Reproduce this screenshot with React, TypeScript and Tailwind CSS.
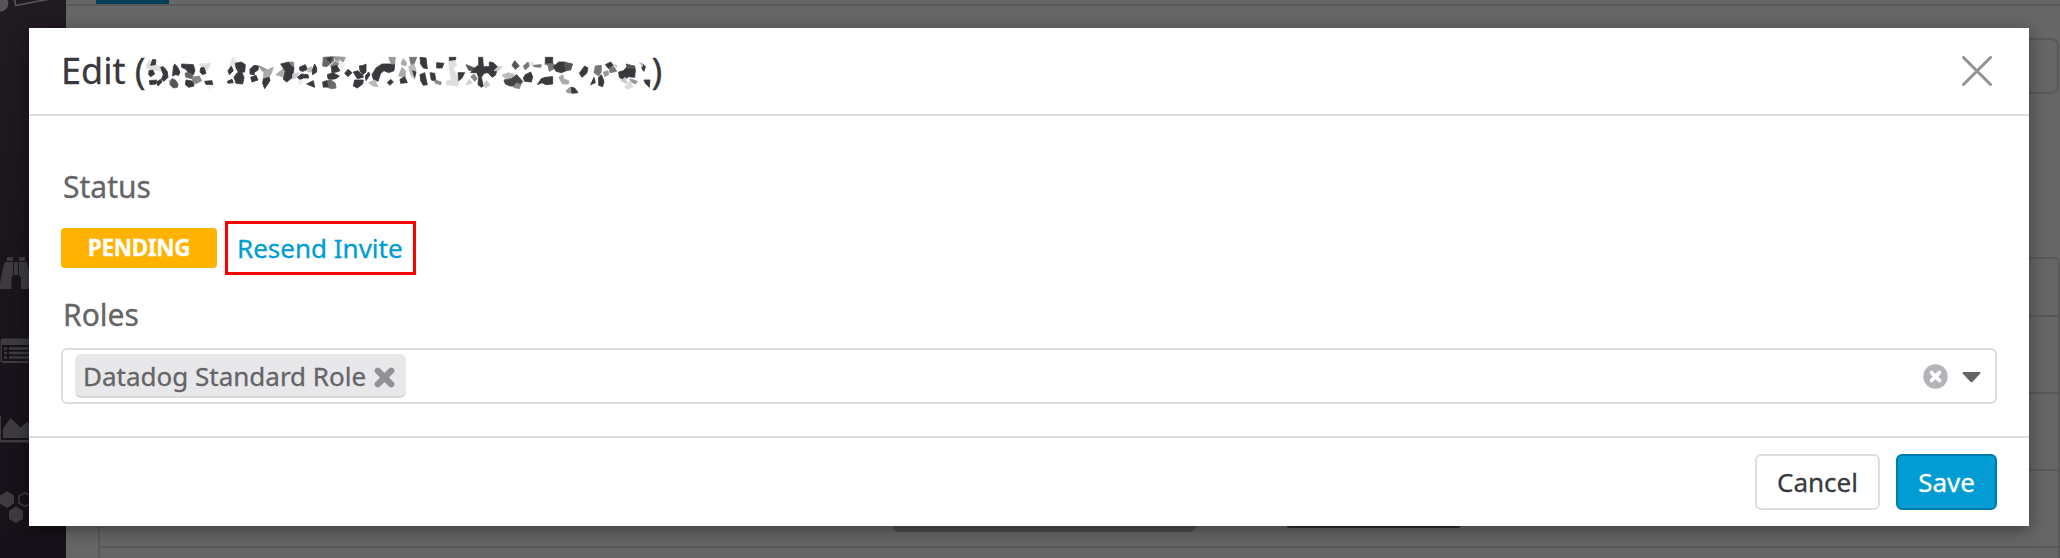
import React from "react";

const D = "#3a383d";

// Fragments of the scrambled e-mail address, at three units per pixel.
const shardsLeft: [string, string][] = [
  ["#dedede", "50,72 60,60 85,78 110,84 108,95 70,90 50,86"],
  [D, "68,58 78,60 76,74 62,76"],
  [D, "92,82 100,80 112,95 114,112 102,124 94,118 100,104"],
  [D, "57,92 68,90 74,102 62,110 56,104"],
  [D, "58,122 80,120 78,132 60,134"],
  [D, "80,126 92,118 96,126 84,138"],
  [D, "130,80 134,72 142,80 150,96 146,106 136,104 128,108"],
  ["#999", "118,122 126,118 124,134 120,132"],
  ["#555358", "126,116 136,120 144,132 142,142 130,144 120,134"],
  [D, "155,82 155,72 190,74 195,92 190,104 176,100 168,88"],
  ["#666", "165,100 176,96 190,108 186,116 168,112"],
  [D, "168,120 190,124 192,138 176,142 166,134"],
  ["#888", "186,112 208,108 215,122 196,132 188,124"],
  ["#dedede", "208,72 242,70 234,88 220,96"],
  [D, "212,84 222,82 228,100 218,104 210,96"],
  [D, "224,124 246,122 248,134 228,134"],
  ["#eee", "228,136 242,136 240,148"],
  ["#e5e5e5", "298,76 310,50 322,68 318,78"],
  [D, "316,70 334,66 346,74 344,96 326,98 318,84"],
  [D, "294,92 304,78 310,92 298,104"],
  [D, "320,100 334,94 342,112 338,132 318,130 312,112"],
  [D, "292,124 306,118 310,128 294,130"],
  [D, "360,88 372,76 386,78 384,90 372,98 374,104 360,102"],
  ["#999", "384,76 410,88 414,98 398,94"],
  ["#aaa", "402,94 430,82 424,100 412,118 400,112"],
  [D, "362,112 378,106 384,120 366,126"],
  [D, "400,116 418,112 420,122 404,146 398,130"],
  ["#aaa", "438,104 462,84 468,96 462,112"],
  [D, "452,72 476,66 492,82 488,112 470,126 460,118 466,94"],
  ["#888", "480,66 490,66 492,80 484,76"],
  ["#ccc", "488,102 506,98 500,112 488,118"],
  [D, "508,82 526,74 532,88 520,94 510,92"],
  ["#bbb", "534,86 546,80 542,96 534,96"],
  [D, "546,92 554,72 560,84 560,96 548,104"],
  [D, "502,112 514,102 534,104 536,114 520,114 512,120"],
  ["#eee", "504,122 520,118 516,132 506,134"],
  [D, "530,132 550,122 554,142"],
  ["#666", "580,52 610,50 612,62 590,80 578,78"],
  ["#999", "612,50 646,52 640,66 626,66 616,60"],
  ["#888", "600,78 616,64 628,72 618,80"],
  [D, "590,56 606,52 600,66"],
  [D, "604,80 620,76 630,92 620,96 606,98"],
  [D, "592,104 608,98 628,108 618,116 606,118 594,116"],
  ["#6a6a6a", "588,124 600,118 616,130 618,144 604,146 588,140"],
  [D, "578,126 590,122 594,140 580,142"],
  ["#eee", "628,60 645,72 640,90 628,82"],
  [D, "654,88 666,98 654,110 644,100"],
  [D, "688,78 700,76 708,72 708,96 698,104 690,92"],
  [D, "670,96 684,92 698,106 700,112 682,116"],
  [D, "674,120 700,120 698,132 682,144 670,138"],
  [D, "706,108 716,96 720,104 708,122"],
  [D, "726,104 738,84 756,72 794,72 792,92 776,98 762,92 752,100 744,124 730,118"],
  ["#bbb", "716,128 734,120 744,140 728,138"],
  ["#999", "776,52 796,52 794,72 784,72"],
  [D, "782,118 790,126 780,136 772,128"],
];

const shardsRight: [string, string][] = [
  ["#aaa", "184,68 190,56 200,68 198,78 184,74"],
  ["#aaa", "176,108 186,82 196,92 196,112"],
  [D, "180,118 194,110 202,128 182,130"],
  ["#777", "208,52 230,52 222,72 214,76"],
  ["#bbb", "206,80 222,72 228,90 224,118 212,104"],
  [D, "218,92 228,96 224,112"],
  [D, "240,52 258,54 262,86 250,84 242,72"],
  [D, "240,104 254,98 262,134 250,136 242,122"],
  [D, "270,98 284,100 288,124 274,120"],
  ["#888", "284,120 304,126 302,134 286,130"],
  [D, "290,68 312,70 306,84 290,84"],
  [D, "328,52 348,52 346,60 328,66"],
  ["#dedede", "326,64 346,62 350,76 340,84 346,100 356,120 354,138 318,134 320,124 334,118 330,100"],
  [D, "354,98 374,98 366,114 356,122"],
  ["#555", "378,74 404,84 398,94 386,90"],
  [D, "416,52 428,52 430,80 448,80 448,66 460,68 474,82 466,106 456,112 444,98 432,100 424,112 430,138 424,142 414,134 416,112 410,98 392,98 408,80 416,76"],
  ["#888", "392,110 402,102 412,116 404,124"],
  ["#ccc", "378,134 388,118 396,130"],
  ["#ccc", "430,132 440,122 450,134 438,144"],
  ["#ccc", "462,92 474,80 486,80 476,92"],
  ["#555", "516,76 524,62 538,78 526,88"],
  ["#bbb", "486,106 504,98 524,104 512,116 494,114"],
  ["#454348", "492,120 514,116 530,104 548,124 538,138 510,138 496,132"],
  ["#888", "530,128 542,134 538,146 520,142"],
  ["#777", "550,78 564,66 568,78 556,90"],
  ["#777", "578,76 604,74 602,82 582,80"],
  ["#ddd", "568,68 580,66 578,78"],
  [D, "556,104 572,96 578,110 574,126 554,124 550,114"],
  ["#777", "614,72 636,66 650,82 628,94 624,76"],
  [D, "616,52 638,52 638,68 616,70"],
  [D, "640,80 656,66 674,66 684,90 664,98 648,94"],
  ["#555", "672,66 698,72 692,90 678,92"],
  [D, "592,134 604,116 616,112 638,110 638,132 618,134 606,128"],
  ["#aaa", "656,112 668,104 672,118 686,122 686,132 668,132"],
  ["#999", "678,152 690,142 698,144 694,160 682,158"],
  [D, "694,142 704,144 714,158 696,160"],
  [D, "718,100 734,78 744,84 740,100 726,112"],
  ["#777", "766,78 784,76 784,96 776,108 762,98"],
  [D, "752,134 762,112 766,128"],
  [D, "776,112 784,104 792,124 788,140 776,136"],
  [D, "796,74 812,66 820,76 806,86"],
  ["#777", "808,84 822,80 830,94 810,98"],
  ["#ccc", "822,74 832,76 830,84"],
  ["#999", "790,96 804,92 806,104 794,110"],
  [D, "836,96 850,92 862,80 884,78 886,92 884,112 866,110 850,120 838,112"],
  ["#555", "858,72 882,78 880,86 862,84"],
  ["#ccc", "842,122 856,112 862,132"],
  ["#ddd", "854,142 870,122 878,142 862,148"],
  ["#999", "870,116 892,124 886,132 874,126"],
  [D, "906,70 916,80 912,94 906,86"],
  ["#ccc", "898,68 906,68 908,80"],
  [D, "912,120 930,120 928,142 916,130"],
];

function ScrambledAddress() {
  return (
    <svg width="506" height="50" viewBox="48 18 1518 150" strokeWidth="2.500" strokeLinejoin="round" className="shrink-0">
      {shardsLeft.map(([fill, points]) => (
        <polygon key={points} fill={fill} stroke={fill} points={points} />
      ))}
      <g transform="translate(630 0)">
        {shardsRight.map(([fill, points]) => (
          <polygon key={points} fill={fill} stroke={fill} points={points} />
        ))}
      </g>
    </svg>
  );
}

function Sidebar() {
  return (
    <nav className="flex h-full w-[66px] shrink-0 flex-col overflow-hidden bg-linear-to-b from-[#211b21] via-[#19151b] to-[#17111a]">
      <svg width="66" height="14" viewBox="0 0 66 14" fill="none">
        <circle cx="0" cy="3.500" r="8.300" fill="#565457" />
        <path d="M14.500-3 15.500 5.500 50-1" stroke="#565457" strokeWidth="1.700" />
      </svg>
      <svg className="mt-[243px]" width="34" height="32" viewBox="0 0 34 32" fill="#3e3b40">
        <path d="M7 0h6v4H7zM19 0h6v4h-6zM5 5h8v13.500L11.500 20v12H0V27C1 19 3 11 5 5zM14 5h4v13h-4zM19 5h7.500C29 11 31 19 32 27v5H21V20l-2-1.500z" />
      </svg>
      <svg className="mt-[49px]" width="44" height="26" viewBox="0 0 44 26" fill="none">
        <path d="M3 .500h38q2 0 2 2v20.500q0 2-2 2H3q-2.500 0-2.500-2V3q0-2.500 2.500-2.500z" fill="#3e3b40" />
        <path d="M2 7h40v16H2z" fill="#17131a" />
        <path d="M4 10.500h3M4 15h3M4 19.500h3M9 10.500h31M9 15h31M9 19.500h31" stroke="#3e3b40" strokeWidth="2.400" />
      </svg>
      <svg className="mt-[52px]" width="44" height="27" viewBox="0 0 44 27" fill="#3e3b40">
        <path d="M0 0h1v24h43v2.500H0zM3 22V12.500L10.500 2l10 9.500L27 6l10 8v8z" />
      </svg>
      <svg className="mt-[48px]" width="44" height="34" viewBox="0 0 44 34">
        <path d="M7 0 14 4.500V12.500L7 17 0 12.500V4.500zM16 15.500l7 4.200v8.200l-7 4.100-7-4.100v-8.200z" fill="#3e3b40" />
        <path d="M25 1.500 31 5v7l-6 3.500L19 12V5z" fill="none" stroke="#3e3b40" strokeWidth="1.500" />
      </svg>
    </nav>
  );
}

function Backdrop() {
  return (
    <div className="flex h-full w-full">
      <Sidebar />
      <div className="flex min-w-0 flex-1 flex-col">
        <div className="h-1.5 w-full shrink-0 border-b-2 border-[#595959] pl-[30px]">
          <div className="h-1 w-[73px] bg-[#003f55]" />
        </div>
        <div className="mr-px ml-8 mt-8 h-14 shrink-0 rounded-lg border-2 border-[#595959]" />
        <div className="ml-8 mt-[163px] shrink-0 rounded-t-md border-2 border-b-0 border-[#595959]">
          <div className="h-[58px] border-b-2 border-[#595959]" />
          <div className="h-[77px] border-b-2 border-[#595959]" />
          <div className="h-[77px] border-b-2 border-[#595959]" />
          <div className="flex h-[77px] items-end border-b-2 border-[#595959]">
            <div className="mb-[14px] ml-[793px] h-10 w-[303px] rounded-md bg-[#4d4d4d]" />
            <div className="mb-[18px] ml-[90px] h-10 w-[175px] rounded bg-[#2e2d2f]" />
          </div>
          <div className="h-10" />
        </div>
      </div>
    </div>
  );
}

function EditUserDialog() {
  return (
    <section
      role="dialog"
      className="absolute left-[29px] top-[28px] flex h-[498px] w-[2000px] flex-col bg-white shadow-[0_4px_16px_rgba(0,0,0,0.4)] [-webkit-text-stroke:0.3px]"
    >
      <header className="flex h-[88px] shrink-0 items-center border-b-2 border-[#dddde4] pl-8 pr-[37px] text-[36px] leading-[50px] text-[#3a383d]">
        <h1 className="flex flex-1 items-center whitespace-pre">
          <span>Edit (</span>
          <ScrambledAddress />
          <span>)</span>
        </h1>
        <button type="button" aria-label="Close">
          <svg width="30" height="30" viewBox="0 0 30 30" stroke="#939096" strokeWidth="3" strokeLinecap="round">
            <path d="M1.500 1.500 28.500 28.500M28.500 1.500 1.500 28.500" />
          </svg>
        </button>
      </header>

      <div className="flex flex-1 flex-col px-8 pt-[51px]">
        <h2 className="pl-0.5 text-[30px] leading-10 text-[#656467]">Status</h2>
        <div className="mt-[14px] flex h-[54px] items-center gap-2">
          <span className="flex h-10 w-[156px] items-center justify-center rounded bg-[#ffb300] text-[22.500px] leading-10 font-bold tracking-[-0.3px] text-white">
            PENDING
          </span>
          <a className="flex h-[54px] w-[191px] items-center border-3 border-[#ff0000] pl-[9px] text-[26px] leading-9 whitespace-nowrap text-[#009cd3]">
            Resend Invite
          </a>
        </div>
        <h2 className="mt-5 pl-0.5 text-[30px] leading-10 text-[#656467]">Roles</h2>
        <div className="mt-[13px] flex h-14 w-[1936px] items-center rounded-md border-2 border-[#dddde4] pl-3 pr-[14px]">
          <div className="flex h-11 w-[331px] items-center rounded-md border-b-2 border-[#d8d8db] bg-[#e8e8ea] pl-2 pt-0.5 text-[26px] leading-9 text-[#656467]">
            <span className="whitespace-nowrap">Datadog Standard Role</span>
            <svg className="ml-2 mt-0.5 shrink-0" width="21" height="21" viewBox="0 0 21 21" stroke="#939096" strokeWidth="6.300" strokeLinecap="round">
              <path d="M3.800 3.800 17.200 17.200M17.200 3.800 3.800 17.200" />
            </svg>
          </div>
          <svg className="ml-auto" width="25" height="25" viewBox="0 0 25 25">
            <circle cx="12.500" cy="12.500" r="12.200" fill="#b6b2b9" />
            <path d="M8.600 8.600 16.400 16.400M16.400 8.600 8.600 16.400" stroke="#fff" strokeWidth="3.800" strokeLinecap="round" />
          </svg>
          <svg className="ml-[14px] mt-0.5" width="19" height="11" viewBox="0 0 19 11" fill="#656467">
            <path d="M1.200 0h16.600q1.200.400.500 1.500l-7.700 8.200q-1.100 1-2.200 0L.700 1.500Q0 .400 1.200 0z" />
          </svg>
        </div>
      </div>

      <footer className="flex h-[90px] shrink-0 items-start justify-end gap-4 border-t-2 border-[#dddde4] pr-8 pt-4 text-[26px] leading-9">
        <button type="button" className="h-14 w-[125px] rounded-md border-2 border-[#dddde4] bg-white text-[#3a383d]">
          Cancel
        </button>
        <button type="button" className="h-14 w-[101px] rounded-md border-2 border-[#007caa] bg-[#009cd3] text-white">
          Save
        </button>
      </footer>
    </section>
  );
}

export default function App() {
  return (
    <main className="relative h-[558px] w-[2060px] overflow-hidden bg-[#666666] font-['Noto_Sans',sans-serif]">
      <Backdrop />
      <EditUserDialog />
    </main>
  );
}
